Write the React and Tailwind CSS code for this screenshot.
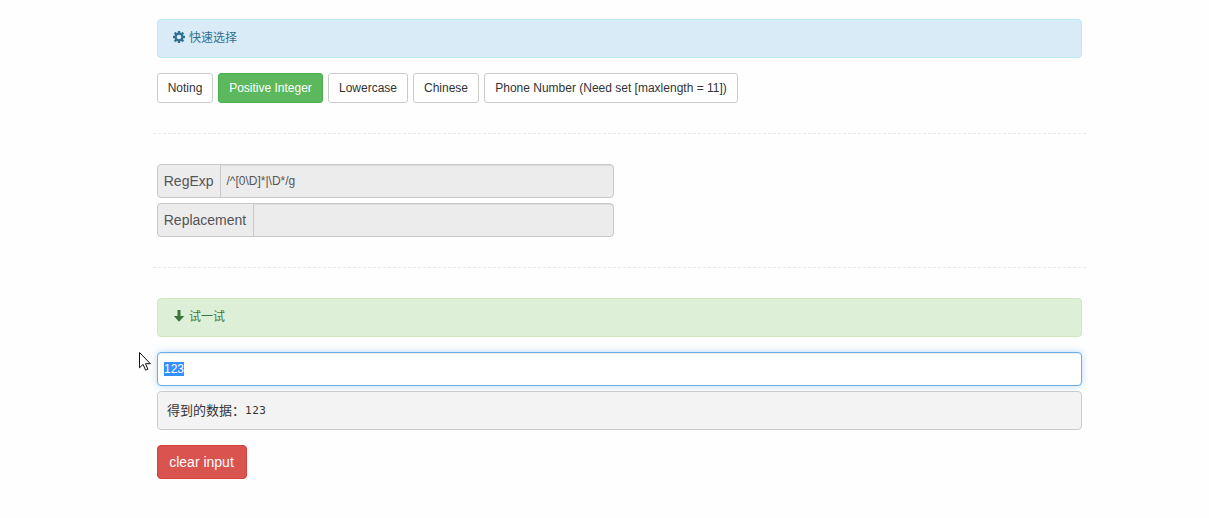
const presets = [
  { label: 'Noting', width: 'w-14' },
  { label: 'Positive Integer', width: 'w-[105px]', active: true },
  { label: 'Lowercase', width: 'w-20' },
  { label: 'Chinese', width: 'w-[66px]' },
  { label: 'Phone Number (Need set [maxlength = 11])', width: 'w-[254px]' },
];

function CogIcon() {
  return (
    <svg className="mb-[3px] mr-1 size-3 shrink-0" viewBox="0 0 12 12" fill="none" stroke="currentColor" aria-hidden="true">
      <circle cx="6" cy="6" r="3.4" strokeWidth="2.2" />
      <path
        d="M6 0v2.2M6 9.8V12M0 6h2.2M9.8 6H12M1.7 1.7l1.6 1.6M8.7 8.7l1.6 1.6M1.7 10.3l1.6-1.6M8.7 3.3l1.6-1.6"
        strokeWidth="2.4"
      />
    </svg>
  );
}

function ArrowDownIcon() {
  return (
    <svg className="mb-[3px] mr-1 size-3 shrink-0" viewBox="0 0 12 12" fill="currentColor" aria-hidden="true">
      <path d="M4.5 0h3v6H11.3L6 11.7.9 6h3.6z" />
    </svg>
  );
}

function Banner({ tone, icon, children }) {
  return (
    <div className={`flex h-[39px] items-center rounded border px-[15px] pb-px text-xs ${tone}`}>
      {icon}
      <span>{children}</span>
    </div>
  );
}

function Divider() {
  return (
    <svg className="-mx-[5px] my-[30px] block h-px w-[935px]" aria-hidden="true">
      <line x1="0" y1="0.5" x2="935" y2="0.5" stroke="#e9e9e9" strokeDasharray="3 2" strokeDashoffset="4" />
    </svg>
  );
}

function Field({ label, labelWidth, value }) {
  return (
    <div className="flex h-[34px] w-[457px] rounded border border-[#c9c9c9] bg-[#ececec] text-[#555]">
      <div className={`flex shrink-0 items-center border-r border-[#c9c9c9] pl-[5.75px] text-sm ${labelWidth}`}>{label}</div>
      <div className="flex flex-1 items-center rounded-r-[3px] pl-[5.5px] text-xs shadow-[inset_0_1px_1px_rgba(0,0,0,0.075)]">
        {value}
      </div>
    </div>
  );
}

export default function App() {
  return (
    <main className="relative h-[518px] overflow-hidden bg-[#fefefe] pl-[157px] pt-[19px] font-['Liberation_Sans','Noto_Sans_CJK_SC',sans-serif] text-[#333]">
      <div className="w-[925px]">
        <Banner tone="border-[#bce8f1] bg-[#d8ebf6] text-[#31708f]" icon={<CogIcon />}>
          快速选择
        </Banner>
        <div className="mt-[15px] flex gap-[5px]">
          {presets.map(({ label, width, active }) => (
            <button
              key={label}
              className={`h-[30px] shrink-0 whitespace-nowrap rounded-[3px] border text-xs ${width} ${
                active ? 'border-[#4cae4c] bg-[#5cb85c] text-white' : 'border-[#ccc] bg-white text-[#333]'
              }`}
            >
              {label}
            </button>
          ))}
        </div>
        <Divider />
        <div className="flex flex-col gap-[5px]">
          <Field label="RegExp" labelWidth="w-[63px]" value="/^[0\D]*|\D*/g" />
          <Field label="Replacement" labelWidth="w-24" value="" />
        </div>
        <Divider />
        <Banner tone="border-[#d0e6bf] bg-[#ddefd7] text-[#3c763d]" icon={<ArrowDownIcon />}>
          试一试
        </Banner>
        <div className="mt-[15px] flex h-[34px] items-center rounded border border-[#66afe9] bg-white px-1.5 text-xs shadow-[inset_0_1px_1px_rgba(0,0,0,0.075),0_0_7px_rgba(102,175,233,0.45)]">
          <span className="h-[14px] bg-[#3390ff] leading-[14px] text-white">123</span>
        </div>
        <div className="mt-[5px] flex h-[39px] items-center rounded border border-[#ccc] bg-[#f3f3f3] px-[9px] pt-px text-[13px]">
          <span>得到的数据：</span>
          <span className="pt-px font-['DejaVu_Sans_Mono',monospace] text-[11px] tracking-[0.5px]">123</span>
        </div>
        <button className="mt-[15px] block h-[34px] w-[90px] rounded border border-[#d43f3a] bg-[#d9534f] pr-px text-sm text-white">
          clear input
        </button>
      </div>
      <svg className="absolute left-[139px] top-[352px] h-5 w-3.5" viewBox="0 0 14 20" aria-hidden="true">
        <path
          d="M.5.5v15.3l3.6-3.4 2.5 5.8 2.3-1-2.4-5.5h4.9z"
          fill="white"
          stroke="#111"
          strokeWidth="1"
        />
      </svg>
    </main>
  );
}
